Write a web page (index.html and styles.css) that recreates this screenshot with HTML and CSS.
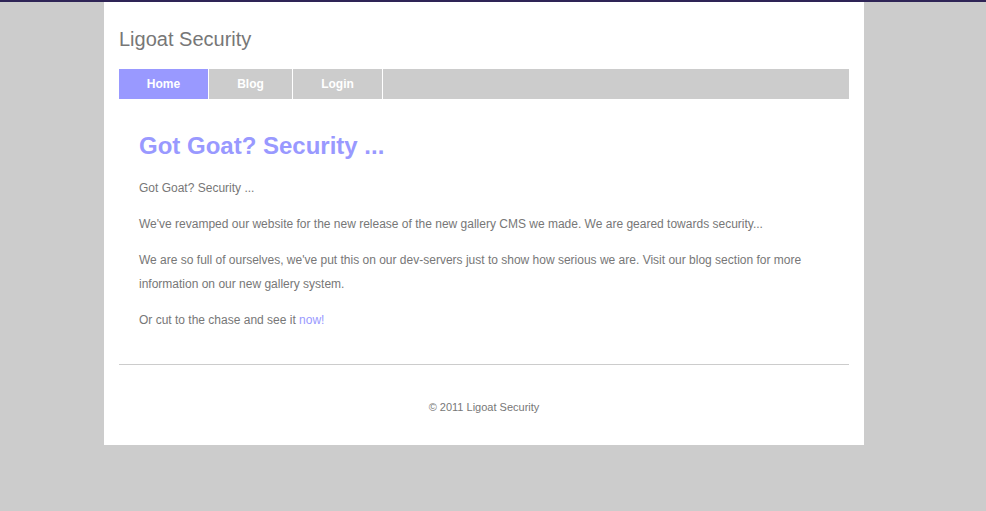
FILE: index.html
```html
<!DOCTYPE html>
<html lang="en">
<head>
<meta charset="utf-8">
<title>Ligoat Security</title>
<link rel="stylesheet" href="styles.css">
</head>
<body>
<div class="page">
  <header class="header">
    <div class="site-title">Ligoat Security</div>
  </header>
  <nav class="nav">
    <a class="nav-item active" href="#">Home</a>
    <a class="nav-item" href="#">Blog</a>
    <a class="nav-item" href="#">Login</a>
  </nav>
  <main class="content">
    <h1 class="heading">Got Goat? Security ...</h1>
    <p>Got Goat? Security ...</p>
    <p>We've revamped our website for the new release of the new gallery CMS we made. We are geared towards security...</p>
    <p>We are so full of ourselves, we've put this on our dev-servers just to show how serious we are. Visit our blog section for more information on our new gallery system.</p>
    <p>Or cut to the chase and see it <a class="link" href="#">now!</a></p>
  </main>
  <hr class="rule">
  <footer class="footer">© 2011 Ligoat Security</footer>
</div>
</body>
</html>
```

FILE: styles.css
```css
html, body {
  margin: 0;
  padding: 0;
}
body {
  background: #cccccc;
  border-top: 2px solid #2e2456;
  padding-right: 18px;
  font-family: "Liberation Sans", Arial, sans-serif;
  color: #777777;
}
.page {
  width: 730px;
  margin: 0 auto;
  padding: 0 15px 30px;
  background: #ffffff;
}
.header {
  padding-top: 23px;
  height: 44px;
}
.site-title {
  font-size: 20px;
  line-height: 28px;
  color: #777777;
}
.nav {
  display: flex;
  height: 30px;
  background: #cccccc;
}
.nav-item {
  display: block;
  width: 83px;
  line-height: 30px;
  text-align: center;
  font-size: 12px;
  font-weight: bold;
  color: #ffffff;
  text-decoration: none;
  border-right: 1px solid #ffffff;
}
.nav-item.active {
  width: 89px;
  background: #9999ff;
}
.nav-item:nth-child(3) {
  width: 89px;
}
.content {
  padding: 32px 20px 20px;
}
.heading {
  margin: 0 0 15px;
  font-size: 24px;
  line-height: 30px;
  font-weight: bold;
  color: #9999ff;
}
.content p {
  margin: 0 0 12px;
  font-size: 12px;
  line-height: 24px;
}
.link {
  color: #9999ff;
  text-decoration: none;
}
.rule {
  margin: 0;
  border: 0;
  border-top: 1px solid #cccccc;
  height: 0;
}
.footer {
  padding-top: 34px;
  text-align: center;
  font-size: 11px;
  line-height: 16px;
}
```
